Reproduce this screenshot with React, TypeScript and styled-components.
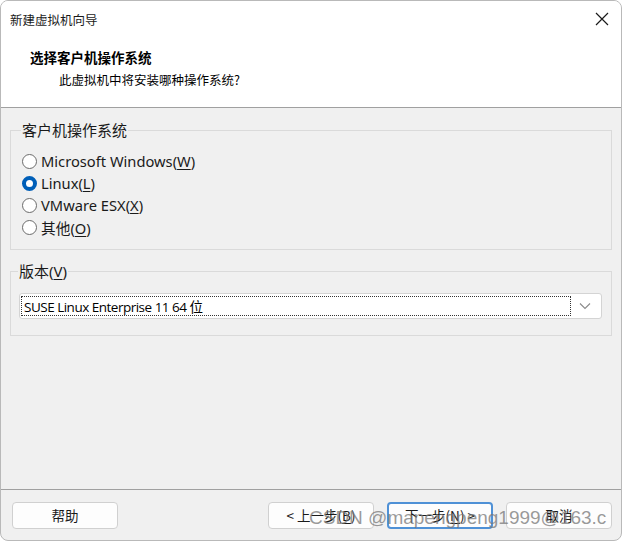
import React from "react";
import styled, { createGlobalStyle } from "styled-components";

const Global = createGlobalStyle`
  html, body { margin: 0; padding: 0; background: #ffffff; }
  body { font-family: "Noto Sans", "Noto Sans CJK SC", sans-serif; }
`;

const Window = styled.div`
  position: relative;
  box-sizing: border-box;
  width: 622px;
  height: 541px;
  border: 1px solid #b9b9b9;
  border-radius: 8px;
  background: #f0f0f0;
  overflow: hidden;
  display: flex;
  flex-direction: column;
  color: #000;
`;

const Header = styled.div`
  background: #ffffff;
  height: 106px;
  border-bottom: 1px solid #a0a0a0;
  display: flex;
  flex-direction: column;
`;

const TitleBar = styled.div`
  display: flex;
  align-items: center;
  justify-content: space-between;
  height: 36px;
  padding: 0 10px 0 9px;
`;

const Title = styled.span`
  font-family: "Noto Sans CJK SC", sans-serif;
  font-size: 12.5px;
  color: #1a1a1a;
`;

const Close = styled.svg`
  width: 14px;
  height: 14px;
  margin-right: 2px;
`;

const Heading = styled.div`
  font-family: "Noto Sans CJK SC", sans-serif;
  font-weight: 700;
  font-size: 13.5px;
  margin: 10px 0 0 29px;
  line-height: 20px;
`;

const Sub = styled.div`
  font-family: "Noto Sans CJK SC", sans-serif;
  font-size: 12.5px;
  margin: 3px 0 0 58px;
  line-height: 20px;
`;

const Body = styled.div`
  flex: 1;
  padding: 13px 9px 0 9px;
  display: flex;
  flex-direction: column;
  gap: 12px;
`;

const Group = styled.fieldset<{ $pad: string }>`
  margin: 0;
  border: 1px solid #dadada;
  padding: ${(p) => p.$pad};
  min-width: 0;
`;

const Legend = styled.legend`
  font-family: "Noto Sans", "Noto Sans CJK SC", sans-serif;
  font-size: 15px;
  padding: 0 1px;
  margin-left: -1px;
  line-height: 18px;
  color: #1a1a1a;
`;

const Radios = styled.div`
  display: flex;
  flex-direction: column;
  gap: 4px;
`;

const RadioRow = styled.label`
  display: flex;
  align-items: center;
  gap: 4px;
  height: 18px;
  font-size: 14.7px;
  color: #1a1a1a;
`;

const Dot = styled.span<{ $on?: boolean }>`
  box-sizing: border-box;
  width: 15px;
  height: 15px;
  border-radius: 50%;
  border: ${(p) => (p.$on ? "4px solid #005fb8" : "1px solid #6b6b6b")};
  background: #fff;
  flex: none;
`;

const U = styled.u`
  text-underline-offset: 2px;
`;

const Select = styled.div`
  box-sizing: border-box;
  height: 26px;
  background: #fff;
  border: 1px solid #d4d4d4;
  border-radius: 3px;
  display: flex;
  align-items: center;
  padding: 2px 8px 2px 1px;
  gap: 8px;
`;

const Focus = styled.div`
  flex: 1;
  height: 100%;
  box-sizing: border-box;
  border: 1px dotted #333;
  display: flex;
  align-items: center;
  padding-left: 2px;
  font-family: "Open Sans", "Noto Sans CJK SC", sans-serif;
  font-size: 13.5px;
  letter-spacing: -0.5px;
  color: #000;
`;

const Chevron = styled.svg`
  width: 12px;
  height: 8px;
  margin-right: 2px;
`;

const Footer = styled.div`
  height: 50px;
  border-top: 1px solid #a0a0a0;
  display: flex;
  align-items: center;
  padding: 0 9px 0 11px;
  gap: 13px;
`;

const Button = styled.button<{ $primary?: boolean }>`
  box-sizing: border-box;
  width: 106px;
  height: 27px;
  border-radius: 4px;
  background: #fdfdfd;
  border: ${(p) => (p.$primary ? "2px solid #4f91d6" : "1px solid #d0d0d0")};
  font-family: "Noto Sans CJK SC", sans-serif;
  font-size: 13.5px;
  color: #1a1a1a;
  padding: 0;
`;

const Spacer = styled.div`
  flex: 1;
`;

const Watermark = styled.div`
  position: absolute;
  left: 308px;
  top: 506px;
  font-family: "Liberation Sans", Arial, sans-serif;
  font-size: 19px;
  color: rgba(120, 120, 120, 0.75);
  white-space: nowrap;
  pointer-events: none;
`;

function Radio({ on, children }: { on?: boolean; children: React.ReactNode }) {
  return (
    <RadioRow>
      <Dot $on={on} />
      <span>{children}</span>
    </RadioRow>
  );
}

export default function App() {
  return (
    <>
      <Global />
      <Window>
        <Header>
          <TitleBar>
            <Title>新建虚拟机向导</Title>
            <Close viewBox="0 0 14 14">
              <path d="M1 1L13 13M13 1L1 13" stroke="#1a1a1a" strokeWidth="1.2" />
            </Close>
          </TitleBar>
          <Heading>选择客户机操作系统</Heading>
          <Sub>此虚拟机中将安装哪种操作系统?</Sub>
        </Header>
        <Body>
          <Group $pad="13px 10px 13px 11px">
            <Legend>客户机操作系统</Legend>
            <Radios>
              <Radio>
                Microsoft Windows(<U>W</U>)
              </Radio>
              <Radio on>
                Linux(<U>L</U>)
              </Radio>
              <Radio>
                VMware ESX(<U>X</U>)
              </Radio>
              <Radio>
                其他(<U>O</U>)
              </Radio>
            </Radios>
          </Group>
          <Group $pad="13px 9px 16px 8px">
            <Legend>
              版本(<U>V</U>)
            </Legend>
            <Select>
              <Focus>SUSE Linux Enterprise 11 64 位</Focus>
              <Chevron viewBox="0 0 12 8">
                <path d="M1 1.5L6 6.5L11 1.5" fill="none" stroke="#8a8a8a" strokeWidth="1.1" />
              </Chevron>
            </Select>
          </Group>
        </Body>
        <Footer>
          <Button>帮助</Button>
          <Spacer />
          <Button>
            &lt; 上一步(<U>B</U>)
          </Button>
          <Button $primary>
            下一步(<U>N</U>) &gt;
          </Button>
          <Button>取消</Button>
        </Footer>
        <Watermark>CSDN @mapengpeng1999@163.c</Watermark>
      </Window>
    </>
  );
}
